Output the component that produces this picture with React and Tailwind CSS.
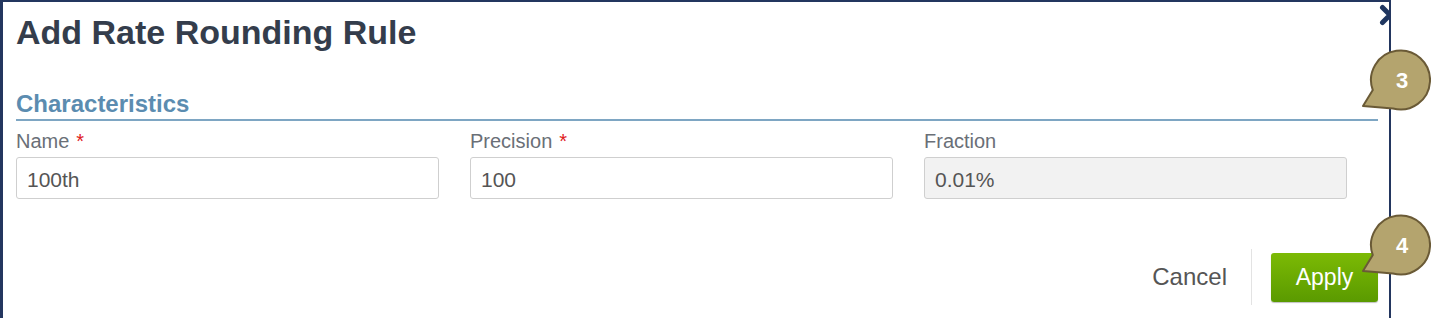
import React from "react";

function Callout({ n, className }) {
  return (
    <div className={"absolute " + className}>
      <svg width="74" height="66" viewBox="0 0 74 66">
        <path
          d="M33.9 60.5 L4 58 L13.8 42.1 A29.5 29.5 0 1 1 33.9 60.5 Z"
          fill="#b4a46e"
          stroke="#6a5a36"
          strokeWidth="2"
          strokeLinejoin="round"
        />
        <text
          x="43"
          y="40"
          textAnchor="middle"
          fill="#ffffff"
          fontFamily="Liberation Sans, Arial, sans-serif"
          fontWeight="700"
          fontSize="22"
        >
          {n}
        </text>
      </svg>
    </div>
  );
}

function Field({ label, required, value, disabled }) {
  return (
    <div className="flex flex-col pr-[31px]">
      <div className="h-[24px] text-[20px] leading-[24px] text-[#6a6f77]">
        {label}
        {required && <span className="ml-[7px] text-[#e0201b]">*</span>}
      </div>
      <div
        className={
          "mt-[4px] h-[42px] overflow-hidden rounded-[3px] border border-[#cfcfcf] px-[10px] text-[21px] leading-[44px] text-[#555555] " +
          (disabled ? "bg-[#f2f2f2]" : "bg-white")
        }
      >
        {value}
      </div>
    </div>
  );
}

export default function App() {
  return (
    <div
      className="relative h-[318px] w-[1431px] overflow-hidden bg-white"
      style={{ fontFamily: '"Liberation Sans", Arial, sans-serif' }}
    >
      <div className="relative h-[330px] w-[1391px] overflow-hidden border-l-[3px] border-r-[2px] border-t-[2px] border-[#23365f] bg-white pl-[13px] pr-[11px]">
        <svg
          className="absolute right-[-12px] top-[2px]"
          width="22"
          height="22"
          viewBox="0 0 22 22"
        >
          <path
            d="M3.5 3.5 L18.5 18.5 M18.5 3.5 L3.5 18.5"
            stroke="#1f3660"
            strokeWidth="5"
            strokeLinecap="round"
          />
        </svg>
        <h1 className="pt-[10px] text-[34px] font-bold leading-[40px] text-[#343d4c]">
          Add Rate Rounding Rule
        </h1>
        <div className="mt-[38px] border-b-2 border-[#7ea6c3] pb-[1px] text-[24px] font-bold leading-[28px] text-[#5b8cb0]">
          Characteristics
        </div>
        <div className="mt-[8px] grid grid-cols-3">
          <Field label="Name" required value="100th" />
          <Field label="Precision" required value="100" />
          <Field label="Fraction" value="0.01%" disabled />
        </div>
        <div className="mt-[50px] flex items-center justify-end">
          <span className="text-[24px] leading-[28px] text-[#555555]">Cancel</span>
          <div className="ml-[24px] mr-[19px] h-[56px] w-px bg-[#e3e3e3]" />
          <button className="h-[49px] w-[107px] rounded-[3px] bg-gradient-to-b from-[#7cba05] to-[#5a9a00] text-[23px] leading-[28px] text-white shadow-[0_1px_1px_rgba(0,0,0,0.25)]">
            Apply
          </button>
        </div>
      </div>
      <Callout n="3" className="left-[1359px] top-[48px]" />
      <Callout n="4" className="left-[1359px] top-[213px]" />
    </div>
  );
}
